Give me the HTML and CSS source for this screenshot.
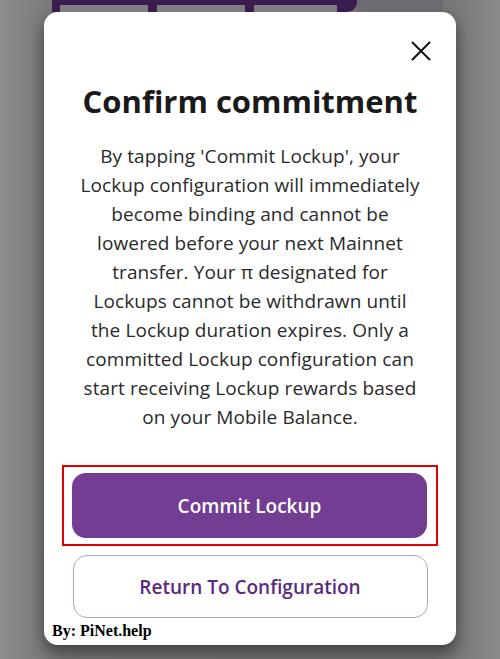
FILE: index.html
```html
<!DOCTYPE html>
<html lang="en">
<head>
    <meta charset="UTF-8">
    <meta name="viewport" content="width=device-width, initial-scale=1.0">
    <title>Confirm commitment</title>
    <link rel="stylesheet" href="styles.css">
</head>
<body>
    <div class="backdrop-strip">
        <div class="strip-purple">
            <div class="strip-tab"></div>
            <div class="strip-tab"></div>
            <div class="strip-tab"></div>
        </div>
        <div class="strip-gray"></div>
    </div>

    <div class="modal">
        <div class="modal-top">
            <button class="close-btn" aria-label="Close">
                <svg width="20" height="20" viewBox="0 0 20 20">
                    <path d="M1 1 L19 19 M19 1 L1 19" stroke="#111" stroke-width="2" fill="none"/>
                </svg>
            </button>
        </div>
        <h1 class="modal-title">Confirm commitment</h1>
        <p class="modal-text">By tapping 'Commit Lockup', your<br>
            Lockup configuration will immediately<br>
            become binding and cannot be<br>
            lowered before your next Mainnet<br>
            transfer. Your π designated for<br>
            Lockups cannot be withdrawn until<br>
            the Lockup duration expires. Only a<br>
            committed Lockup configuration can<br>
            start receiving Lockup rewards based<br>
            on your Mobile Balance.</p>

        <div class="highlight">
            <button class="btn btn-primary">Commit Lockup</button>
        </div>
        <button class="btn btn-outline">Return To Configuration</button>

        <div class="credit">By: PiNet.help</div>
    </div>
</body>
</html>
```

FILE: styles.css
```css
body {
    margin: 0;
    padding: 0;
    height: 659px;
    overflow: hidden;
    font-family: 'Open Sans', Lato, sans-serif;
    background: linear-gradient(to right, #8c8c8c 0%, #7a7a7a 10%, #787878 90%, #8a8a8a 100%);
}

.backdrop-strip {
    display: flex;
    height: 12px;
    padding-left: 52px;
}

.strip-purple {
    display: flex;
    gap: 9px;
    width: 297px;
    padding: 5px 0 0 8px;
    background-color: #3b1c4f;
    border-bottom-right-radius: 10px;
}

.strip-tab {
    width: 88px;
    height: 7px;
    background-color: #807c84;
}

.strip-tab:last-child {
    width: 83px;
}

.strip-gray {
    width: 86px;
    background-color: #6d6a70;
}

.modal {
    width: 412px;
    height: 633px;
    margin-left: 44px;
    box-sizing: border-box;
    background-color: #fff;
    border-radius: 14px;
    box-shadow: 0 8px 18px rgba(0, 0, 0, 0.5);
    display: flex;
    flex-direction: column;
    align-items: center;
}

.modal-top {
    align-self: stretch;
    display: flex;
    justify-content: flex-end;
    padding: 29px 25px 0 0;
}

.close-btn {
    width: 20px;
    height: 20px;
    padding: 0;
    border: none;
    background: none;
    cursor: pointer;
}

.modal-title {
    margin: 22px 0 0;
    font-size: 31px;
    line-height: 36px;
    font-weight: 700;
    color: #1a1a1a;
}

.modal-text {
    margin: 23px 0 0;
    width: 380px;
    font-size: 19px;
    letter-spacing: 0.1px;
    line-height: 29px;
    text-align: center;
    color: #2a2a2a;
    white-space: nowrap;
}

.highlight {
    margin-top: 33px;
    padding: 6px 9px 6px 8px;
    border: 2px solid #e00000;
}

.btn {
    display: block;
    width: 355px;
    font-family: 'Open Sans', Lato, sans-serif;
    font-size: 19px;
    font-weight: 600;
    border-radius: 14px;
    cursor: pointer;
}

.btn-primary {
    height: 65px;
    border: none;
    background-color: #723d92;
    color: #fff;
}

.btn-outline {
    height: 63px;
    margin-top: 9px;
    border: 1px solid #b8a2c8;
    background-color: #fff;
    color: #5a2a7e;
}

.credit {
    align-self: flex-start;
    margin: 4px 0 0 8px;
    font-family: 'Liberation Serif', serif;
    font-weight: 700;
    font-size: 16px;
    color: #000;
}
```
